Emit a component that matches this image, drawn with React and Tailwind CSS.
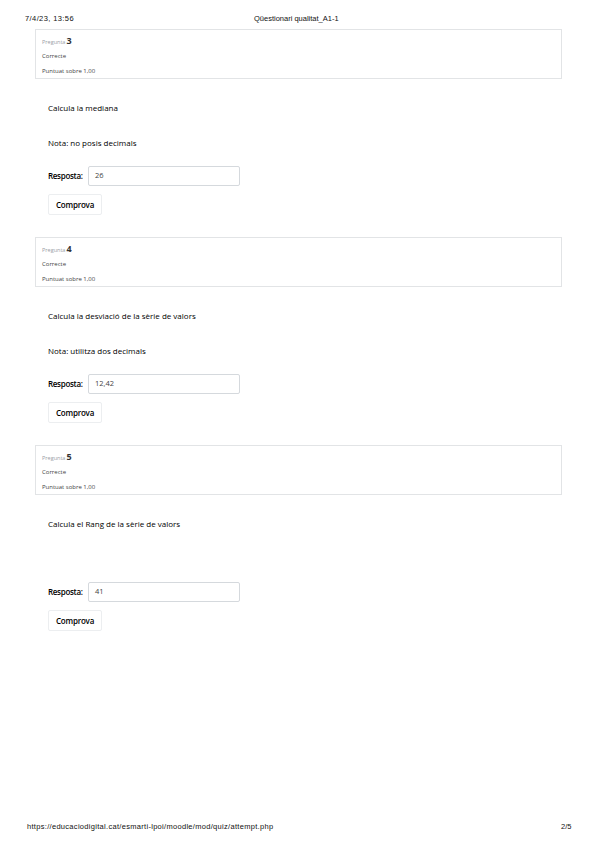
import React from "react";

const questions = [
  { n: "3", text: "Calcula la mediana", nota: "Nota: no posis decimals", value: "26" },
  { n: "4", text: "Calcula la desviació  de la sèrie de valors", nota: "Nota: utilitza dos decimals", value: "12,42" },
  { n: "5", text: "Calcula el Rang de la sèrie de valors", nota: "", value: "41" },
];

function Question({ q }) {
  return (
    <div className="flex flex-col h-[208px]">
      <div className="mx-[35px] w-[527px] h-[50px] border border-[#e2e4e6] bg-white flex flex-col pl-[6px]">
        <div className="h-[15px] flex items-end leading-none">
          <span className="text-[5.5px] text-[#9aa0a6]">Pregunta</span>
          <span className="text-[9px] font-bold text-[#333] ml-[1px] leading-[9px]">{q.n}</span>
        </div>
        <div className="h-[14px] flex items-end text-[6px] text-[#444] leading-none">Correcte</div>
        <div className="h-[15px] flex items-end text-[6px] text-[#444] leading-none">Puntuat sobre 1,00</div>
      </div>
      <div className="ml-[48px] mt-[24px] h-[10px] flex items-center text-[8px] text-black leading-none">{q.text}</div>
      <div className="ml-[48px] mt-[25px] h-[10px] flex items-center text-[8px] text-black leading-none">{q.nota}</div>
      <div className="ml-[48px] mt-[18px] flex items-center">
        <span className="text-[8px] font-semibold text-black tracking-[-0.3px] w-[40px]">Resposta:</span>
        <div className="w-[152px] h-[20px] border border-[#d5d9dd] rounded-[2px] bg-white flex items-center pl-[6px] text-[7.5px] text-[#444]">{q.value}</div>
      </div>
      <div className="ml-[48px] mt-[8px] w-[54px] h-[21px] border border-[#eceef0] rounded-[2px] bg-white flex items-center justify-center text-[8px] font-semibold text-black tracking-[-0.2px]">Comprova</div>
    </div>
  );
}

export default function App() {
  return (
    <div className="w-[599px] h-[848px] bg-white relative overflow-hidden" style={{ fontFamily: '"Open Sans", "Noto Sans", sans-serif' }}>
      <div className="h-[29px] relative" style={{ fontFamily: '"Liberation Sans", Arial, sans-serif' }}>
        <span className="absolute left-[25px] top-[14px] text-[7.5px] leading-[10px] text-[#111] tracking-[0.4px]">7/4/23, 13:56</span>
        <span className="absolute left-[254px] top-[14px] text-[7.5px] leading-[10px] text-[#111]">Qüestionari qualitat_A1-1</span>
      </div>
      {questions.map((q) => (
        <Question key={q.n} q={q} />
      ))}
      <div className="absolute left-[27px] top-[822px] text-[7.5px] leading-[10px] text-[#111] tracking-[0.3px]" style={{ fontFamily: '"Liberation Sans", Arial, sans-serif' }}>
        https://educaciodigital.cat/esmarti-lpoi/moodle/mod/quiz/attempt.php
      </div>
      <div className="absolute left-[561px] top-[822px] text-[7.5px] leading-[10px] text-[#111]" style={{ fontFamily: '"Liberation Sans", Arial, sans-serif' }}>
        2/5
      </div>
    </div>
  );
}
